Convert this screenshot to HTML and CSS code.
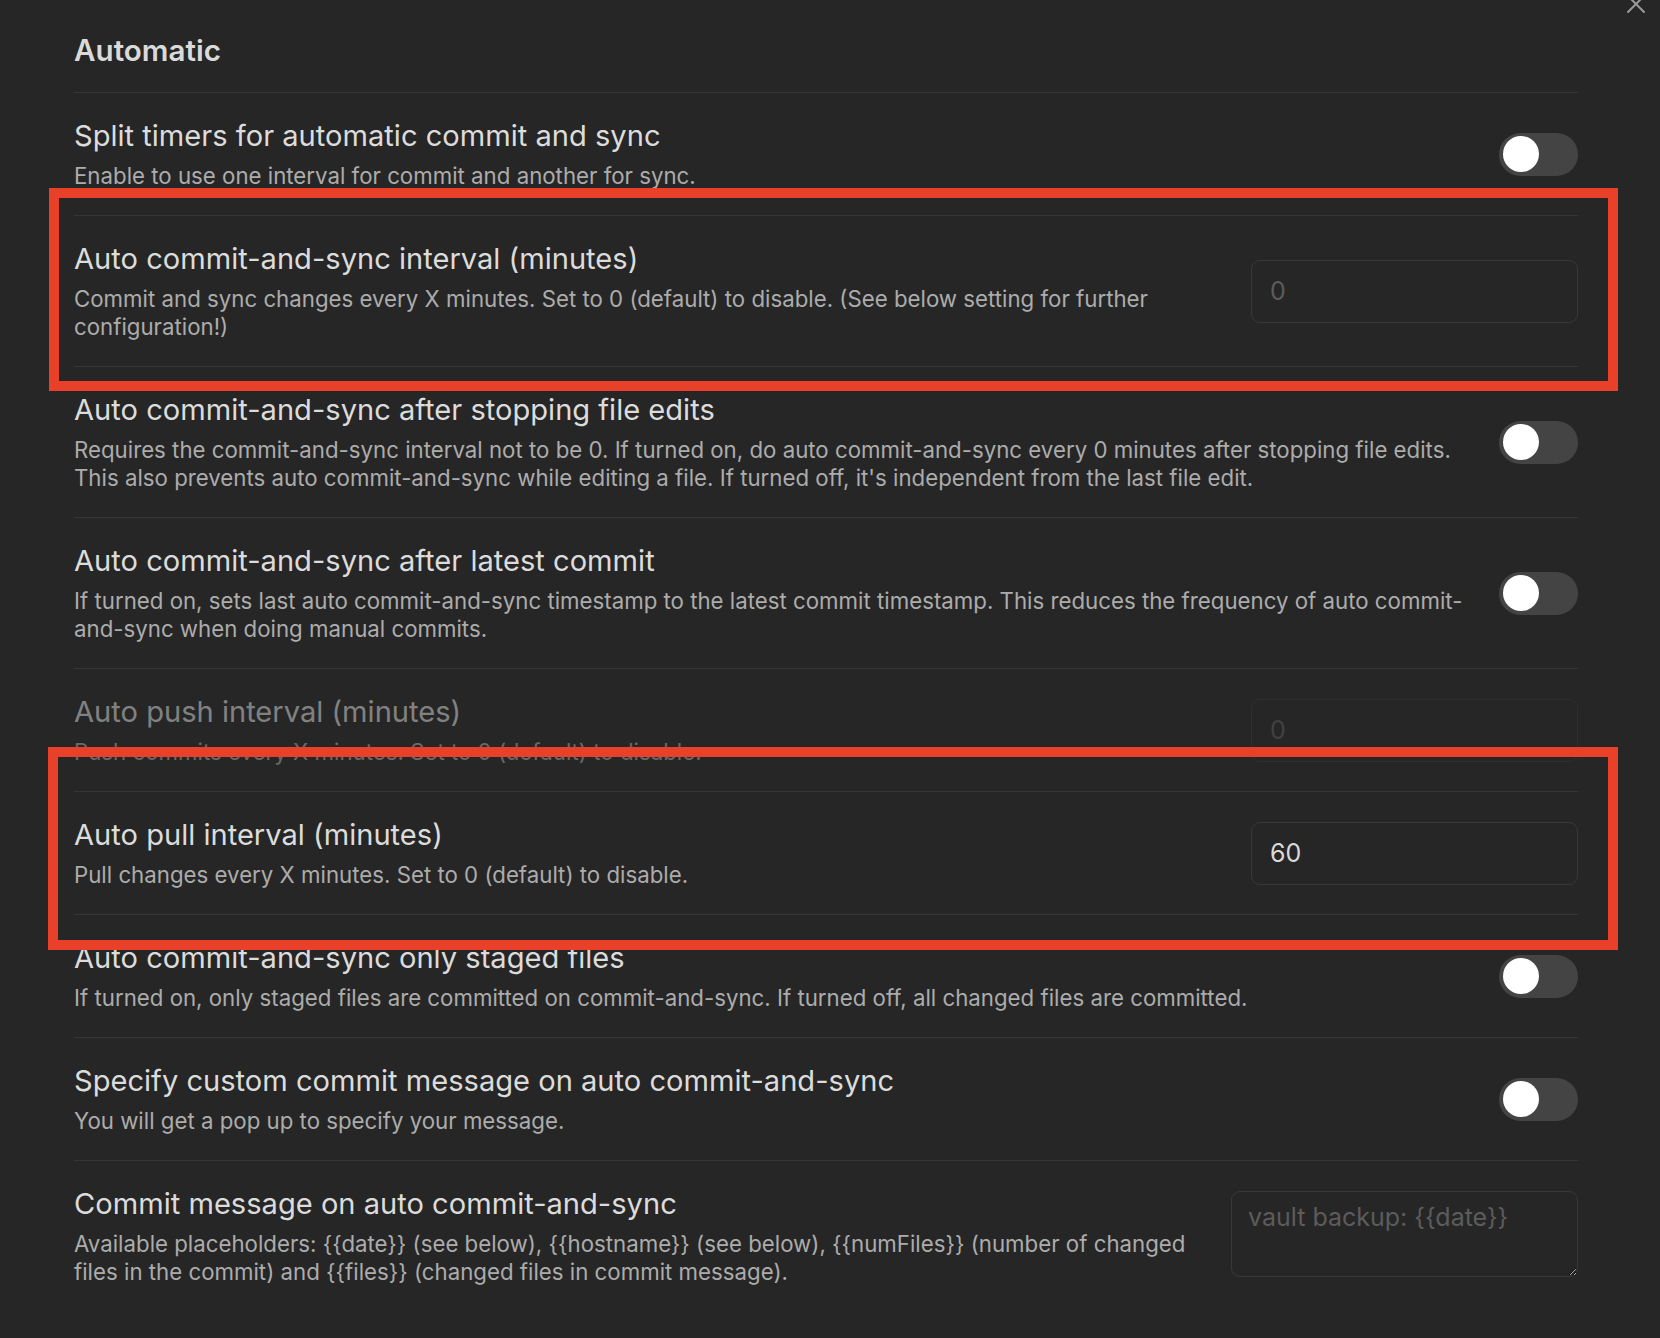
FILE: index.html
```html
<!DOCTYPE html>
<html lang="en">
<head>
<meta charset="utf-8">
<title>Automatic settings</title>
<link rel="stylesheet" href="styles.css">
</head>
<body>
<div class="modal">
  <button class="close" aria-label="Close">
    <svg viewBox="0 0 24 24" width="24" height="24"><path d="M4 4 L20 20 M20 4 L4 20" /></svg>
  </button>
  <div class="content">
    <div class="heading">Automatic</div>

    <div class="item">
      <div class="info">
        <div class="name">Split timers for automatic commit and sync</div>
        <div class="desc">Enable to use one interval for commit and another for sync.</div>
      </div>
      <div class="control"><div class="toggle"><div class="knob"></div></div></div>
    </div>

    <div class="item">
      <div class="info">
        <div class="name">Auto commit-and-sync interval (minutes)</div>
        <div class="desc">Commit and sync changes every X minutes. Set to 0 (default) to disable. (See below setting for further configuration!)</div>
      </div>
      <div class="control"><input class="text-input" type="text" placeholder="0"></div>
    </div>

    <div class="item">
      <div class="info">
        <div class="name">Auto commit-and-sync after stopping file edits</div>
        <div class="desc">Requires the commit-and-sync interval not to be 0. If turned on, do auto commit-and-sync every 0 minutes after stopping file edits. This also prevents auto commit-and-sync while editing a file. If turned off, it's independent from the last file edit.</div>
      </div>
      <div class="control"><div class="toggle"><div class="knob"></div></div></div>
    </div>

    <div class="item">
      <div class="info">
        <div class="name">Auto commit-and-sync after latest commit</div>
        <div class="desc">If turned on, sets last auto commit-and-sync timestamp to the latest commit timestamp. This reduces the frequency of auto commit-and-sync when doing manual commits.</div>
      </div>
      <div class="control"><div class="toggle"><div class="knob"></div></div></div>
    </div>

    <div class="item disabled">
      <div class="info">
        <div class="name">Auto push interval (minutes)</div>
        <div class="desc">Push commits every X minutes. Set to 0 (default) to disable.</div>
      </div>
      <div class="control"><input class="text-input" type="text" placeholder="0" disabled></div>
    </div>

    <div class="item">
      <div class="info">
        <div class="name">Auto pull interval (minutes)</div>
        <div class="desc">Pull changes every X minutes. Set to 0 (default) to disable.</div>
      </div>
      <div class="control"><input class="text-input" type="text" value="60"></div>
    </div>

    <div class="item">
      <div class="info">
        <div class="name">Auto commit-and-sync only staged files</div>
        <div class="desc">If turned on, only staged files are committed on commit-and-sync. If turned off, all changed files are committed.</div>
      </div>
      <div class="control"><div class="toggle"><div class="knob"></div></div></div>
    </div>

    <div class="item">
      <div class="info">
        <div class="name">Specify custom commit message on auto commit-and-sync</div>
        <div class="desc">You will get a pop up to specify your message.</div>
      </div>
      <div class="control"><div class="toggle"><div class="knob"></div></div></div>
    </div>

    <div class="item">
      <div class="info">
        <div class="name">Commit message on auto commit-and-sync</div>
        <div class="desc">Available placeholders: {{date}} (see below), {{hostname}} (see below), {{numFiles}} (number of changed files in the commit) and {{files}} (changed files in commit message).</div>
      </div>
      <div class="control"><textarea class="text-area" placeholder="vault backup: {{date}}"></textarea></div>
    </div>
  </div>

  <div class="highlight highlight-1"></div>
  <div class="highlight highlight-2"></div>
</div>
</body>
</html>
```
FILE: styles.css
```css
html, body {
  margin: 0;
  padding: 0;
  background: #262626;
  color-scheme: dark;
}

body {
  font-family: Inter, "Noto Sans", "Liberation Sans", sans-serif;
  color: #dadada;
  min-height: 1338px;
}

.modal {
  position: relative;
  min-height: 1338px;
  overflow: hidden;
}

.close {
  position: absolute;
  top: -8px;
  right: 12px;
  width: 24px;
  height: 24px;
  padding: 0;
  border: 0;
  background: transparent;
}

.close svg path {
  stroke: #9a9a9a;
  stroke-width: 2;
  fill: none;
  stroke-linecap: round;
}

.content {
  margin-left: 74px;
  width: 1504px;
  padding-top: 32px;
}

.heading {
  font-size: 29.6px;
  font-weight: 600;
  line-height: 36px;
  color: #dadada;
  padding-bottom: 24px;
}

.item {
  display: flex;
  align-items: center;
  gap: 30px;
  border-top: 1px solid #363636;
  padding: 25px 0 25px;
}

.info {
  flex: 1 1 auto;
  min-width: 0;
}

.name {
  font-size: 29.1px;
  line-height: 36px;
  color: #dcdcdc;
}

.desc {
  margin-top: 8px;
  font-size: 22.25px;
  line-height: 28px;
  color: #acacac;
}

.control {
  flex: 0 0 auto;
  display: flex;
  justify-content: flex-end;
}

.disabled .info,
.disabled .control {
  opacity: 0.5;
}

.toggle {
  width: 79px;
  height: 43px;
  border-radius: 22px;
  background: #444444;
  display: flex;
  align-items: center;
  padding-left: 4px;
  box-sizing: border-box;
}

.knob {
  width: 36px;
  height: 36px;
  border-radius: 50%;
  background: #ffffff;
}

.text-input {
  width: 327px;
  height: 63px;
  box-sizing: border-box;
  border: 1.5px solid #383838;
  border-radius: 9px;
  background: #262626;
  padding: 0 18px;
  font-family: Inter, "Noto Sans", "Liberation Sans", sans-serif;
  font-size: 25px;
  color: #dadada;
  outline: none;
}

.text-input::placeholder,
.text-area::placeholder {
  color: #5c5c5c;
}

.text-area {
  width: 347px;
  height: 86px;
  margin-top: -4px;
  box-sizing: border-box;
  border: 1.5px solid #383838;
  border-radius: 9px;
  background: #262626;
  padding: 9px 16px;
  font-family: Inter, "Noto Sans", "Liberation Sans", sans-serif;
  font-size: 25px;
  line-height: 32px;
  color: #dadada;
  resize: both;
  outline: none;
  display: block;
}

.highlight {
  position: absolute;
  border: 10px solid #e9402a;
  box-sizing: border-box;
  pointer-events: none;
}

.highlight-1 {
  left: 49px;
  top: 188px;
  width: 1569px;
  height: 203px;
}

.highlight-2 {
  left: 48px;
  top: 747px;
  width: 1570px;
  height: 203px;
}
```
